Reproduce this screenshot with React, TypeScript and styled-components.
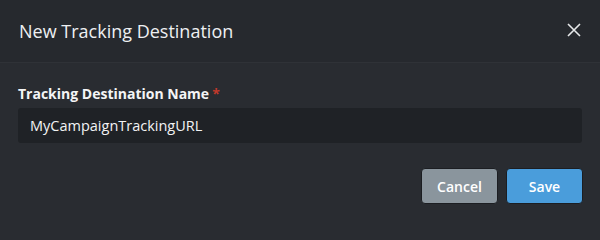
import React, { useState } from 'react';
import styled, { createGlobalStyle } from 'styled-components';

const GlobalStyle = createGlobalStyle`
  html, body {
    margin: 0;
    padding: 0;
    background: #292c31;
    font-family: 'Open Sans', 'Noto Sans', sans-serif;
  }
`;

const Modal = styled.div`
  width: 600px;
  height: 223px;
  background: #292c31;
  display: flex;
  flex-direction: column;
`;

const Header = styled.div`
  height: 62px;
  display: flex;
  align-items: center;
  justify-content: space-between;
  padding: 0 17px 0 19px;
  background: #26292e;
  border-bottom: 1px solid #2f3237;
`;

const Title = styled.h4`
  margin: 0;
  font-size: 18px;
  font-weight: 400;
  color: #eef0f2;
`;

const CloseButton = styled.button`
  background: none;
  border: 0;
  padding: 0;
  width: 16px;
  height: 16px;
  display: flex;
  color: #e6e8ea;
  cursor: pointer;
`;

const Body = styled.div`
  padding: 21px 18px 0 18px;
  display: flex;
  flex-direction: column;
`;

const Label = styled.label`
  font-size: 14px;
  font-weight: 700;
  color: #f4f5f6;
  margin-bottom: 5px;
`;

const Required = styled.span`
  color: #c0392b;
  margin-left: 3px;
`;

const Input = styled.input`
  box-sizing: border-box;
  height: 35px;
  width: 100%;
  background: #1f2226;
  border: 0;
  border-radius: 3px;
  padding: 0 12px;
  font-family: inherit;
  font-size: 14.5px;
  color: #f2f3f4;
  outline: none;
  caret-color: #f2f3f4;
`;

const Footer = styled.div`
  display: flex;
  justify-content: flex-end;
  gap: 8px;
  padding: 25px 17px 0 0;
`;

const Button = styled.button<{ $primary?: boolean }>`
  box-sizing: border-box;
  width: 77px;
  height: 36px;
  border-radius: 4px;
  border: 1px solid #1c1e22;
  background: ${(p) => (p.$primary ? '#4a9ddb' : '#8a959d')};
  color: #ffffff;
  font-family: inherit;
  font-size: 14px;
  font-weight: 600;
  cursor: pointer;
`;

const App = () => {
  const [name, setName] = useState('MyCampaignTrackingURL');

  return (
    <>
      <GlobalStyle />
      <Modal>
        <Header>
          <Title>New Tracking Destination</Title>
          <CloseButton aria-label="Close">
            <svg width="14" height="14" viewBox="0 0 14 14">
              <path d="M1 1L13 13M13 1L1 13" stroke="currentColor" strokeWidth="1.6" />
            </svg>
          </CloseButton>
        </Header>
        <Body>
          <Label htmlFor="td-name">
            Tracking Destination Name<Required>*</Required>
          </Label>
          <Input id="td-name" value={name} onChange={(e) => setName(e.target.value)} autoFocus />
        </Body>
        <Footer>
          <Button>Cancel</Button>
          <Button $primary>Save</Button>
        </Footer>
      </Modal>
    </>
  );
};

export default App;
